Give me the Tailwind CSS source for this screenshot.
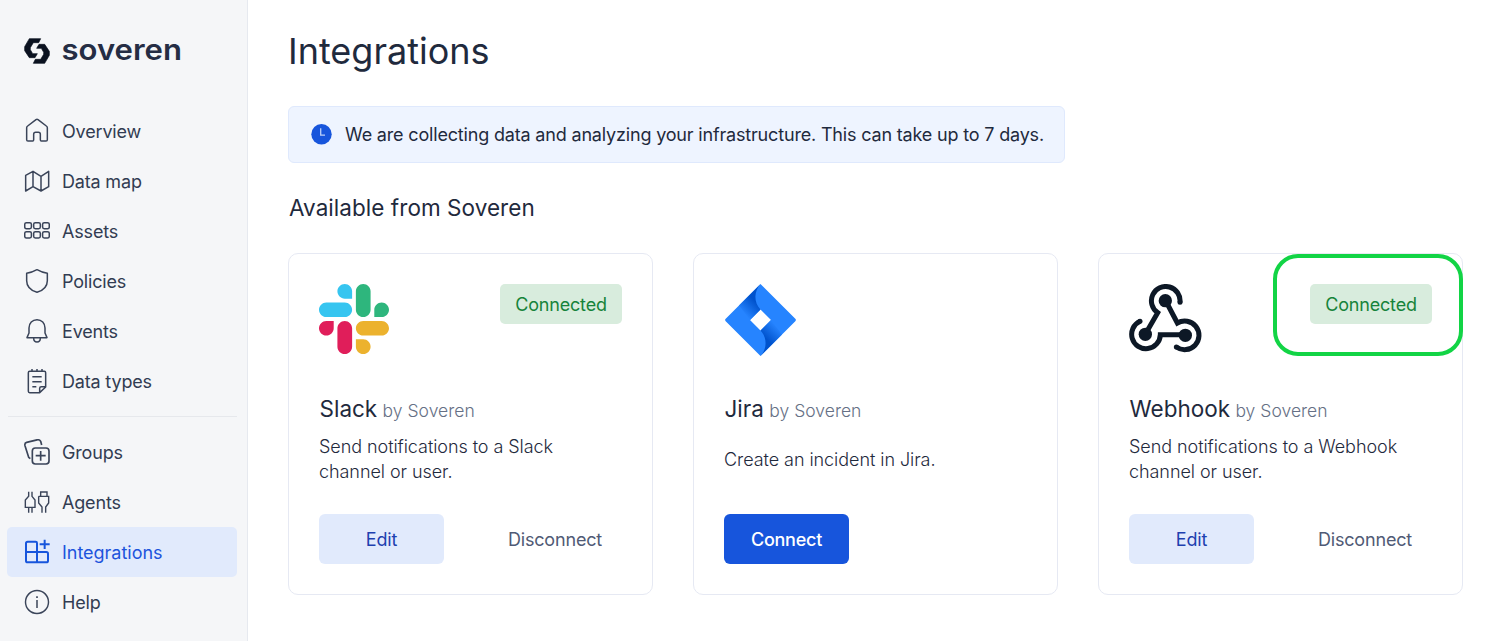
<!DOCTYPE html>
<html lang="en">
<head>
<meta charset="utf-8">
<title>Integrations</title>
<script src="https://cdn.jsdelivr.net/npm/@tailwindcss/browser@4"></script>
</head>
<body class="flex h-[641px] overflow-hidden bg-white font-['Inter',sans-serif] text-[18px] tracking-[-0.175px] text-[#1f2a3d]">
<aside class="flex w-[248px] shrink-0 flex-col border-r border-[#e6e9ef] bg-[#f5f6f8] pl-[7px] pr-[10px]">
  <div class="flex h-[106px] items-start gap-3 pl-[17px] pt-[38px]">
    <svg class="size-[26px]" viewBox="72 54 78 78" fill="#0b1220" stroke="#0b1220" stroke-width="2" stroke-linejoin="round">
      <path d="M88 56H122L116 68H100L91 83V89L98 101H112L105 113H88L74 92V80Z"/>
      <path d="M134 130H100L106 118H122L131 103V97L124 85H110L117 73H134L148 94V106Z"/>
    </svg>
    <svg class="h-[36px] w-[124px] overflow-visible" viewBox="0 0 124 36"><text x="-0.500" y="22.400" textLength="120.500" lengthAdjust="spacingAndGlyphs" font-family="Inter" font-weight="600" font-size="29" letter-spacing="0" fill="#252d44">soveren</text></svg>
  </div>
  <nav class="flex flex-col text-[#323c52]">
    <a class="flex h-[50px] items-center gap-3 pl-[17px]">
      <svg class="size-[26px]" viewBox="72 294 78 78" fill="none" stroke="#3a4459" stroke-width="4.500" stroke-linejoin="round"><path d="M80 323Q80 320 83 318L108 299Q111 297 114 299L139 318Q142 320 142 323V359Q142 363 138 363H124Q121 363 121 359V343Q121 337 115 337H107Q101 337 101 343V359Q101 363 98 363H84Q80 363 80 359Z"/></svg>
      <span>Overview</span></a>
    <a class="flex h-[50px] items-center gap-3 pl-[17px]">
      <svg class="size-[26px]" viewBox="72 54 78 78" fill="none" stroke="#3a4459" stroke-width="4.500" stroke-linejoin="round"><path d="M77 76L99 64L123 79L146 64V110L123 123L99 110L77 123ZM99 64V110M123 79V123"/></svg>
      <span>Data map</span></a>
    <a class="flex h-[50px] items-center gap-3 pl-[17px]">
      <svg class="size-[26px]" viewBox="72 204 78 78" fill="none" stroke="#3a4459" stroke-width="4.500"><rect x="74.200" y="218" width="20" height="18" rx="5"/><rect x="101" y="218" width="20" height="18" rx="5"/><rect x="127.800" y="218" width="20" height="18" rx="5"/><rect x="74.200" y="245" width="20" height="19" rx="5"/><rect x="101" y="245" width="20" height="19" rx="5"/><rect x="127.800" y="245" width="20" height="19" rx="5"/></svg>
      <span>Assets</span></a>
    <a class="flex h-[50px] items-center gap-3 pl-[17px]">
      <svg class="size-[26px]" viewBox="72 24 78 78" fill="none" stroke="#3a4459" stroke-width="4.500" stroke-linejoin="round"><path d="M111 29Q125 37 142 40V62C142 79 130 91 111 97C92 91 80 79 80 62V40Q97 37 111 29Z"/></svg>
      <span>Policies</span></a>
    <a class="flex h-[50px] items-center gap-3 pl-[17px]">
      <svg class="size-[26px]" viewBox="72 174 78 78" fill="none" stroke="#3a4459" stroke-width="4.500" stroke-linejoin="round"><path d="M87 204C87 189 97 179 111 179S135 189 135 204V219L141 233H81L87 219ZM101 235C101 242 105 246 111 246S121 242 121 235"/></svg>
      <span>Events</span></a>
    <a class="flex h-[50px] items-center gap-3 pl-[17px]">
      <svg class="size-[26px]" viewBox="72 324 78 78" fill="none" stroke="#3a4459" stroke-width="4.500" stroke-linejoin="round"><path d="M89 334H133Q137 334 137 338V381L119 398H89Q85 398 85 394V338Q85 334 89 334ZM137 380H124Q119 380 119 385V398M96 327V335M111 327V335M126 327V335M97 350H125M97 365H125M97 380H109"/></svg>
      <span>Data types</span></a>
  </nav>
  <div class="my-[10px] ml-px h-px shrink-0 bg-[#e6e8ec]"></div>
  <nav class="flex flex-col text-[#323c52]">
    <a class="flex h-[50px] items-center gap-3 pl-[17px]">
      <svg class="size-[26px]" viewBox="72 102 78 78" fill="none" stroke="#3a4459" stroke-width="5" stroke-linejoin="round"><rect x="97" y="129" width="50" height="48" rx="9"/><path d="M122 138V167M107 152H137M91 161L86 157L75 122Q73 114 80 112L111 104.500Q119 103 122 109L125 120"/></svg>
      <span>Groups</span></a>
    <a class="flex h-[50px] items-center gap-3 pl-[17px]">
      <svg class="size-[26px]" viewBox="72 252 78 78" fill="none" stroke="#3a4459" stroke-width="4.200"><path d="M86 260V274L76 285V307H105V285L96 274V260M86 307V323M96 307V323M122 274V261H141V274M116 274H146V294L137 306V323M116 274V294L126 306V323"/></svg>
      <span>Agents</span></a>
    <a class="flex h-[50px] items-center gap-3 rounded-[5px] bg-[#e1eafc] pl-[17px] text-[#1d54dc]">
      <svg class="size-[26px]" viewBox="72 57 78 78" fill="none" stroke="#1755dc" stroke-width="6" stroke-linejoin="round"><path d="M111 96V69Q111 65 107 65H83Q78 65 78 70V122Q78 127 83 127H139Q144 127 144 122V101Q144 96 139 96H78M111 96V127M134 59V87M119 73H149"/></svg>
      <span class="tracking-[-0.020px]">Integrations</span></a>
    <a class="flex h-[50px] items-center gap-3 pl-[17px]">
      <svg class="size-[26px]" viewBox="72 207 78 78" fill="none" stroke="#3a4459" stroke-width="4.300"><circle cx="111" cy="246" r="34.500"/><path d="M111 240V264" stroke-width="4.500"/><path d="M111 229V234" stroke-width="5"/></svg>
      <span>Help</span></a>
  </nav>
</aside>
<main class="flex-1 pl-10">
  <h1 class="mt-[29px] text-[36px] leading-[44px] tracking-normal">Integrations</h1>
  <div class="mt-[33px] flex h-[57px] w-[777px] items-center gap-[13px] rounded-[6px] border border-[#dfe9fd] bg-[#eef4ff] pl-[22px]">
    <svg class="size-[21px]" viewBox="0 0 21 21"><circle cx="10.5" cy="10.2" r="10.2" fill="#1755dc"/><path d="M9.7 4.3V11.2H14" fill="none" stroke="#bcd0f8" stroke-width="1.3"/></svg>
    <p class="-mt-px">We are collecting data and analyzing your infrastructure. This can take up to 7 days.</p>
  </div>
  <h2 class="mt-[30px] pl-px text-[22.5px] leading-[30px] tracking-[0.050px]">Available from Soveren</h2>
  <div class="mt-[30px] grid w-[1175px] grid-cols-3 gap-10">
    <section class="flex h-[342px] flex-col rounded-[10px] border border-[#e6e9f3] px-[30px] pt-[30px]">
      <div class="flex h-[110px] items-start justify-between">
        <svg class="size-[70px]" viewBox="0 0 122.8 122.8"><path fill="#e01e5a" d="M25.8 77.6c0 7.1-5.8 12.9-12.9 12.9S0 84.7 0 77.6s5.8-12.9 12.9-12.9h12.9v12.9zm6.5 0c0-7.1 5.8-12.9 12.9-12.9s12.9 5.8 12.9 12.9v32.3c0 7.1-5.8 12.9-12.9 12.9s-12.9-5.8-12.9-12.9V77.6z"/><path fill="#36c5f0" d="M45.2 25.8c-7.1 0-12.9-5.8-12.9-12.9S38.1 0 45.2 0s12.9 5.8 12.9 12.9v12.9H45.2zm0 6.5c7.1 0 12.9 5.8 12.9 12.9s-5.8 12.9-12.9 12.9H12.9C5.8 58.1 0 52.3 0 45.2s5.8-12.9 12.9-12.9h32.3z"/><path fill="#2eb67d" d="M97 45.2c0-7.1 5.8-12.9 12.9-12.9s12.9 5.8 12.9 12.9-5.8 12.9-12.9 12.9H97V45.2zm-6.5 0c0 7.1-5.8 12.9-12.9 12.9s-12.9-5.8-12.9-12.9V12.9C64.7 5.8 70.5 0 77.6 0s12.9 5.8 12.9 12.9v32.3z"/><path fill="#ecb22e" d="M77.6 97c7.1 0 12.9 5.8 12.9 12.9s-5.8 12.9-12.9 12.9-12.9-5.8-12.9-12.9V97h12.9zm0-6.5c-7.1 0-12.9-5.8-12.9-12.9s5.8-12.9 12.9-12.9h32.3c7.1 0 12.9 5.8 12.9 12.9s-5.8 12.9-12.9 12.9H77.6z"/></svg>
        <span class="flex h-10 w-[122px] items-center justify-center rounded-[5px] bg-[#d8ecdd] text-[#16833a]">Connected</span>
      </div>
      <h3 class="pl-[0.500px] text-[22.5px] leading-[30px] tracking-normal">Slack <span class="-ml-px text-[17.5px] font-light tracking-[0.030px] text-[#667085]">by Soveren</span></h3>
      <p class="mt-2 flex h-[50px] items-center font-light leading-[25px] tracking-[-0.060px]">Send notifications to a Slack<br>channel or user.</p>
      <div class="mt-[30px] flex gap-[55px]">
        <button class="h-[50px] w-[125px] rounded-[6px] bg-[#e1eafc] pt-px text-[#1e40af]">Edit</button>
        <button class="h-[50px] w-[112px] pt-px text-[#505a75]">Disconnect</button>
      </div>
    </section>
    <section class="flex h-[342px] flex-col rounded-[10px] border border-[#e6e9f3] px-[30px] pt-[30px]">
      <div class="flex h-[110px] items-start">
        <svg class="h-[73px] w-[73px]" viewBox="0 0 73 73">
          <defs>
            <linearGradient id="ja" gradientUnits="userSpaceOnUse" x1="34" y1="16" x2="20" y2="30"><stop offset=".15" stop-color="#0052cc"/><stop offset="1" stop-color="#2684ff"/></linearGradient>
            <linearGradient id="jb" gradientUnits="userSpaceOnUse" x1="39" y1="56" x2="53" y2="42"><stop offset=".15" stop-color="#0052cc"/><stop offset="1" stop-color="#2684ff"/></linearGradient>
          </defs>
          <path fill="#2684ff" fill-rule="evenodd" d="M36.5 0L71.3 34.8Q72.5 36 71.3 37.2L36.5 72L1.7 37.2Q.5 36 1.7 34.8ZM36.5 25.6L26 36L36.5 46.5L47 36Z"/>
          <path fill="url(#ja)" d="M36.5 0C30 7 29.500 18 36.500 25.600L26 36L15 21.500Z"/>
          <path fill="url(#jb)" d="M36.500 72C43 65 43.500 54 36.500 46.500L47 36L58 50.500Z"/>
        </svg>
      </div>
      <h3 class="pl-[0.500px] text-[22.5px] leading-[30px] tracking-normal">Jira <span class="-ml-px text-[17.5px] font-light tracking-[0.030px] text-[#667085]">by Soveren</span></h3>
      <p class="mt-2 flex h-[50px] items-center font-light leading-[25px] tracking-[-0.060px]">Create an incident in Jira.</p>
      <div class="mt-[30px] flex">
        <button class="h-[50px] w-[125px] rounded-[6px] bg-[#1755dc] pt-px font-medium tracking-[-0.250px] text-white">Connect</button>
      </div>
    </section>
    <section class="relative flex h-[342px] flex-col rounded-[10px] border border-[#e6e9f3] px-[30px] pt-[30px]">
      <div class="absolute -right-px top-0 h-[102px] w-[190px] rounded-[25px] border-4 border-[#12d445]"></div>
      <div class="flex h-[110px] items-start justify-between">
        <svg class="h-[70px] w-[73px]" viewBox="117 117 219 210" fill="none" stroke="#0d1826" stroke-width="15">
          <path d="M270 172A43 43 0 1 0 203 203L168 264"/>
          <path d="M229 171L262 234A43 43 0 1 1 259 306"/>
          <path d="M150 229A43 43 0 1 0 211 269H284"/>
          <g fill="#0d1826" stroke="none"><circle cx="226" cy="167" r="20"/><circle cx="166" cy="268" r="20"/><circle cx="286" cy="271" r="20"/><circle cx="270" cy="172" r="7.500"/><circle cx="259" cy="306" r="7.500"/><circle cx="150" cy="229" r="7.500"/></g>
        </svg>
        <span class="flex h-10 w-[122px] items-center justify-center rounded-[5px] bg-[#d8ecdd] text-[#16833a]">Connected</span>
      </div>
      <h3 class="pl-[0.500px] text-[22.5px] leading-[30px] tracking-normal">Webhook <span class="-ml-px text-[17.5px] font-light tracking-[0.030px] text-[#667085]">by Soveren</span></h3>
      <p class="mt-2 flex h-[50px] items-center font-light leading-[25px] tracking-[-0.060px]">Send notifications to a Webhook<br>channel or user.</p>
      <div class="mt-[30px] flex gap-[55px]">
        <button class="h-[50px] w-[125px] rounded-[6px] bg-[#e1eafc] pt-px text-[#1e40af]">Edit</button>
        <button class="h-[50px] w-[112px] pt-px text-[#505a75]">Disconnect</button>
      </div>
    </section>
  </div>
</main>
</body>
</html>
